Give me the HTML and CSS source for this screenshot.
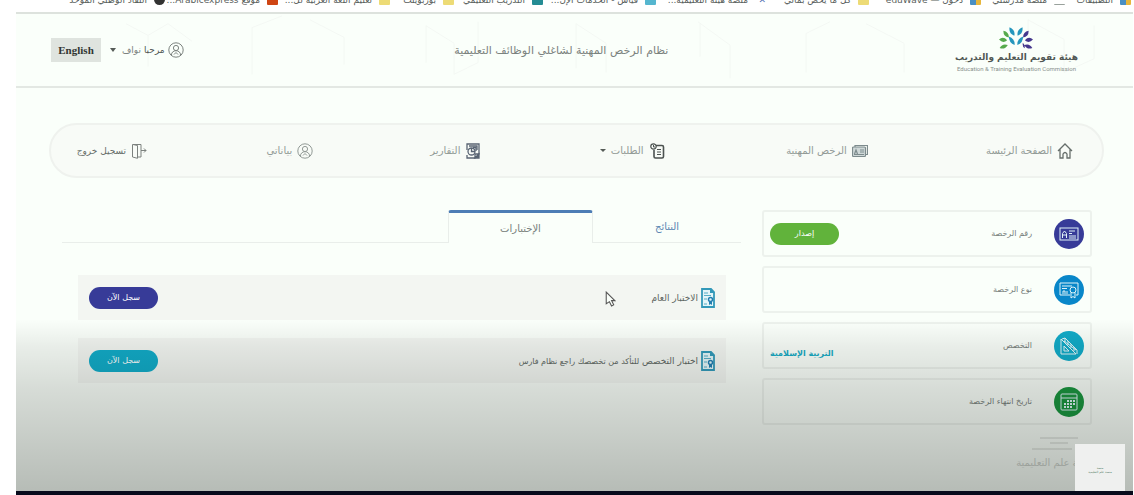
FILE: index.html
```html
<!DOCTYPE html>
<html lang="ar" dir="rtl">
<head>
    <meta charset="UTF-8">
    <meta name="viewport" content="width=device-width, initial-scale=1.0">
    <title>نظام الرخص المهنية</title>
    <link rel="stylesheet" href="styles.css">
</head>
<body>
    <!-- Shared icons -->
    <svg class="sprite" aria-hidden="true">
        <symbol id="user" viewBox="0 0 16 16">
            <g fill="none" stroke="currentColor">
                <circle cx="8" cy="8" r="7.2"/>
                <circle cx="8" cy="6" r="2.6"/>
                <path d="M3.4 13.2c0-6 9.2-6 9.2 0M6 12.5l2-2 2 2"/>
            </g>
        </symbol>
        <symbol id="exam" viewBox="0 0 14 20">
            <path d="M1 1h9l3 3v15H1z" fill="#e3f5f8" stroke="#3399b9" stroke-width="1.8"/>
            <path d="M9 0l5 5H9z" fill="#3399b9"/>
            <path d="M3 5h4M3 7.5h7M3 11h3M3 16h3" stroke="#56aec6" fill="none" stroke-width="1.2"/>
            <circle cx="9.500" cy="11.500" r="2" fill="none" stroke="#237eb0" stroke-width="1.5"/>
            <path d="M8 13v4l1.500-1 1.500 1v-4z" fill="#237eb0"/>
        </symbol>
    </svg>

    <div class="page">
        <!-- Bookmarks -->
        <div class="bookmarks">
            <a href="#"><i class="mark multi"></i>التطبيقات</a>
            <a href="#"><i class="mark dash"></i>منصة مدرستي</a>
            <a href="#"><i class="mark multi"></i>دخول — eduWave</a>
            <a href="#"><i class="mark yellow"></i>كل ما يخص بماتي</a>
            <a href="#"><i class="mark cross">✕</i>منصة هيئة التعليمية...</a>
            <a href="#"><i class="mark sky"></i>قياس - الخدمات الإل...</a>
            <a href="#"><i class="mark teal"></i>التدريب التعليمي</a>
            <a href="#"><i class="mark yellow"></i>بوربوينت</a>
            <a href="#"><i class="mark yellow"></i>تعليم اللغة العربية لل...</a>
            <a href="#"><i class="mark orange"></i>موقع Arabicexpress...</a>
            <a href="#"><i class="mark dark"></i>النفاذ الوطني الموحد</a>
        </div>

        <!-- Header -->
        <header class="header">
            <svg class="pattern" viewBox="0 0 1117 74" preserveAspectRatio="none" aria-hidden="true">
                <path d="M110 10l22 12v32M132 22l20-12 24 18M236 62V14l30-12M294 6l34 18v28M410 50V12l28 18v32l24-12V8M560 56V10l30 20v30M682 8l32 24v34M684 10v34M790 60V20l24-12M850 10l38 20v30M1012 6l36 20v34l30-14V12M1012 6v34"/>
            </svg>
            <a class="logo" href="#">
                <svg viewBox="0 0 100 66" aria-hidden="true">
                    <g fill="#2596bd">
                        <path d="M31 0q18 8 14 25-17-6-14-25zM69 0q-18 8-14 25 17-6 14-25zM29 27q18 6 17 25-17-6-17-25zM71 27q-18 6-17 25 17-6 17-25z"/>
                    </g>
                    <g fill="#56aa4c">
                        <path d="M13 10q17 4 16 20-17-2-16-20zM0 36q12-11 24 2-12 11-24-2zM2 61q8-15 24-9-9 15-24 9z"/>
                    </g>
                    <g fill="#45378d">
                        <path d="M87 10q-17 4-16 20 17-2 16-20zM100 36q-12-11-24 2 12 11 24-2zM98 61q-8-15-24-9 9 15 24 9zM70 46q-2 12 6 16 0-12-6-16z"/>
                    </g>
                </svg>
                <strong>هيئة تقويم التعليم والتدريب</strong>
                <span>Education &amp; Training Evaluation Commission</span>
            </a>
            <h1>نظام الرخص المهنية لشاغلي الوظائف التعليمية</h1>
            <div class="account">
                <button class="user">
                    <svg class="icon"><use href="#user"/></svg>
                    <span><b>مرحبا</b> نواف</span>
                    <i class="caret"></i>
                </button>
                <button class="lang">English</button>
            </div>
        </header>

        <!-- Main navigation -->
        <nav class="nav">
            <a href="#">
                <svg class="icon" viewBox="0 0 16 16" fill="none" stroke="#666e6b" stroke-width="1.3"><path d="M1 8l7-7 7 7M3 6.500V15h3v-4q2-3 4 0v4h3V6.500"/></svg>
                الصفحة الرئيسة
            </a>
            <a href="#">
                <svg class="icon" viewBox="0 0 16 16" fill="none" stroke="#7d8b8d" stroke-width="1.2"><path d="M3 4V2.500h12.500v9H14"/><rect x=".5" y="4" width="13" height="9.500" rx="1" fill="#cfd8d8"/><path d="M2.500 11l1.500-4 1.500 4M8 7h4M8 9h4M2 11.500h10"/></svg>
                الرخص المهنية
            </a>
            <a href="#">
                <svg class="icon" viewBox="0 0 16 16" fill="none" stroke="#4c5250" stroke-width="1.6"><path d="M7 2.500h6q1.500 0 1.500 1.500v9.500q0 1.500-1.500 1.500H6.500Q5 15 5 13.500V7"/><circle cx="4.500" cy="3.500" r="2.700" stroke-width="1.200"/><path d="M4.500 2v2H6M8 6.500h4M8 9h4M8 11.500h4" stroke-width="1"/></svg>
                الطلبات
                <i class="caret small"></i>
            </a>
            <a href="#">
                <svg class="icon" viewBox="0 0 16 16" fill="none" stroke="#596473" stroke-width="1.3"><path d="M2 7V1h12v10l-4 4H2v-3M4 3h8v4M10 15v-4h4"/><circle cx="6.500" cy="8.500" r="3.500"/><path d="M6.500 5v3.500H10M8 4.500h3V8"/><path d="M14 11v4h-4z" fill="#596473"/></svg>
                التقارير
            </a>
            <a href="#">
                <svg class="icon"><use href="#user"/></svg>
                بياناتي
            </a>
            <a class="logout" href="#">
                <svg class="icon" viewBox="0 0 16 16" fill="none" stroke="#7c817e"><path d="M1.500 1.500H10V14H7M1.500 1.500V14l5 1.300V2.500L2 1.500M10 7.500h5M13 5.500l2 2-2 2"/></svg>
                تسجيل خروج
            </a>
        </nav>

        <main class="content">
            <!-- Licence details -->
            <section class="license">
                <div class="card">
                    <span class="badge navy"><svg viewBox="0 0 20 20"><rect x="1" y="4" width="18" height="12"/><path d="M3.500 14V9.500L5.500 7l2 2.500V14M3.500 11h4M10 7h6M10 9.500h3M10 12h7M10 14h7"/></svg></span>
                    <span class="label">رقم الرخصة</span>
                    <button class="pill green">إصدار</button>
                </div>
                <div class="card">
                    <span class="badge blue"><svg viewBox="0 0 20 20"><path d="M11 15H1V3h18v12h-2M3 6h10M3 8.500h5M4 14v-3h2v3M8 14v-3"/><circle cx="14" cy="10" r="3"/><path d="M12 12.500V18l2-1.500 2 1.500v-5.500"/></svg></span>
                    <span class="label">نوع الرخصة</span>
                </div>
                <div class="card">
                    <span class="badge cyan"><svg viewBox="0 0 20 20"><path d="M2 3v15h15zM5 10v5h5zM3 3l3-1 12 12v4M6 2v4M9 5v4M12 8v4M15 11v4M5 5l12 9"/></svg></span>
                    <span class="label">التخصص</span>
                    <span class="value">التربية الإسلامية</span>
                </div>
                <div class="card">
                    <span class="badge forest"><svg viewBox="0 0 20 20"><rect x="2" y="2" width="16" height="16" rx="1"/><path d="M2 6h16"/><path d="M8 9h8M5 12h11M5 15h8" stroke-width="2" stroke-dasharray="2 1"/></svg></span>
                    <span class="label">تاريخ انتهاء الرخصة</span>
                </div>
            </section>

            <!-- Exams -->
            <section class="exams">
                <div class="tabs" role="tablist">
                    <button class="tab" role="tab" aria-selected="false">النتائج</button>
                    <button class="tab active" role="tab" aria-selected="true">الإختبارات</button>
                </div>
                <div class="exam">
                    <svg class="doc"><use href="#exam"/></svg>
                    <p>الاختبار العام</p>
                    <button class="pill navy">سجل الآن</button>
                </div>
                <div class="exam">
                    <svg class="doc"><use href="#exam"/></svg>
                    <p>اختبار التخصص <small>للتأكد من تخصصك راجع نظام فارس</small></p>
                    <button class="pill cyan">سجل الآن</button>
                </div>
            </section>
        </main>

        <footer class="footer">
            <svg viewBox="0 0 52 14" aria-hidden="true"><path d="M10 1h38M20 6h18M2 12h40"/></svg>
            <span>منصة علم التعليمية</span>
        </footer>
        <div class="shade"></div>
        <svg class="cursor" viewBox="0 0 10 15" aria-hidden="true"><path d="M1 1v11l3-2 2 4 2-1-2-4h3z"/></svg>
        <div class="stamp">
            <span>منصة</span>
            <span>منصة علم التعليمية</span>
        </div>
    </div>
</body>
</html>
```
FILE: styles.css
```css
/* General Reset */
* {
    margin: 0;
    padding: 0;
    box-sizing: border-box;
    font-family: 'DejaVu Sans', sans-serif;
}

body {
    direction: ltr;
    padding: 0 1px 0 16px;
    background: #fff;
}

button {
    border: none;
    background: none;
    cursor: pointer;
}

a {
    color: inherit;
    text-decoration: none;
}

.sprite {
    position: absolute;
    width: 0;
    height: 0;
}

.page {
    position: relative;
    direction: rtl;
    min-height: 100vh;
    display: flex;
    flex-direction: column;
    overflow: hidden;
    background: #fafffa;
    border-bottom: 4px solid #080b1c;
}

.icon {
    width: 16px;
    height: 16px;
    flex: none;
}

.caret {
    border: 3px solid transparent;
    border-top: 4px solid #555b57;
    border-bottom: none;
}

.caret.small {
    border-width: 3px 3px 0;
}

/* Bookmarks */
.bookmarks {
    display: grid;
    grid-template-columns: 66fr 84fr 112fr 103fr 110fr 113fr 89fr 64fr 112fr 113fr 92fr;
    align-content: end;
    height: 12px;
    padding: 0 2px 6px 57px;
    background: #fff;
    color: #59605c;
    font-size: 9px;
    line-height: 12px;
}

.bookmarks a {
    display: flex;
    gap: 7px;
    min-width: 0;
    white-space: nowrap;
}

.mark {
    width: 11px;
    height: 11px;
    flex: none;
    font-style: normal;
    border-radius: 1px;
}

.mark.multi { background: linear-gradient(90deg, #4a8fc4 50%, #e7b63c 50%); }
.mark.yellow { background: #eddb76; }
.mark.sky { background: #55b6cf; }
.mark.teal { background: #258c94; }
.mark.orange { background: #cf4513; }
.mark.cross { color: #4a6bb0; }
.mark.dash { border-bottom: 1px solid #99a19c; }
.mark.dark { background: #333; border-radius: 50%; }

/* Header */
.header {
    position: relative;
    display: flex;
    justify-content: space-between;
    align-items: center;
    height: 76px;
    padding: 0 55px 0 35px;
    border-top: 2px solid #dde2dd;
    border-bottom: 2px solid #e3e8e3;
}

.pattern {
    position: absolute;
    inset: 0;
    width: 100%;
    height: 100%;
    fill: none;
    stroke: #f4f8f4;
}

.logo {
    position: relative;
    display: flex;
    flex-direction: column;
    align-items: center;
    margin-left: 16px;
    color: #505754;
}

.logo svg {
    width: 34px;
    height: 23px;
}

.logo strong {
    font-size: 9px;
    line-height: 15px;
}

.logo span {
    font: 6px/8px 'Roboto', sans-serif;
    color: #89908c;
}

.header h1 {
    position: relative;
    font-size: 11px;
    font-weight: normal;
    color: #7a827e;
}

.account {
    position: relative;
    display: flex;
    align-items: center;
    gap: 9px;
}

.user {
    display: flex;
    align-items: center;
    gap: 3px;
    font-size: 9px;
    color: #7c837f;
}

.user b {
    font-weight: normal;
    color: #505653;
}

.user .caret {
    margin-right: 3px;
}

.lang {
    width: 50px;
    height: 24px;
    background: #dfe4df;
    color: #303532;
    font: bold 11px 'Liberation Serif', serif;
}

/* Navigation */
.nav {
    display: grid;
    grid-template-columns: 205fr 203fr 183fr 168fr 166fr 67fr;
    align-items: center;
    height: 55px;
    margin: 35px 29px 0 33px;
    padding: 0 29px;
    background: #f8fbf7;
    border: 2px solid #eff2ee;
    border-radius: 28px;
    color: #929a96;
    font-size: 10px;
}

.nav a {
    display: flex;
    align-items: center;
    gap: 5px;
    min-width: 0;
    white-space: nowrap;
}

.nav .logout {
    color: #666d69;
    font-size: 9px;
}

/* Content */
.content {
    display: grid;
    grid-template-columns: 330fr 679fr;
    gap: 21px;
    padding: 32px 41px 0 46px;
}

.license {
    display: flex;
    flex-direction: column;
    gap: 9px;
}

.card {
    display: flex;
    align-items: center;
    height: 47px;
    padding: 0 6px;
    border: 2px solid #edf2ed;
    border-radius: 3px;
    font-size: 8px;
    color: #777e7a;
}

.badge {
    display: flex;
    align-items: center;
    justify-content: center;
    width: 30px;
    height: 30px;
    margin-left: 22px;
    border-radius: 50%;
}

.badge svg {
    width: 20px;
    height: 20px;
    fill: none;
    stroke: #e0f3f7;
}

.navy { background: #373b98; }
.blue { background: #0987c9; }
.cyan { background: #12abc8; }
.forest { background: #1b9640; }
.green { background: #61b33b; }

.pill {
    width: 69px;
    height: 22px;
    margin-right: auto;
    border-radius: 11px;
    color: #fff;
    font-size: 8px;
}

.value {
    align-self: flex-end;
    margin-right: auto;
    padding-bottom: 9px;
    color: #16aac4;
    font-weight: bold;
}

/* Tabs */
.tabs {
    display: flex;
    height: 33px;
    margin-bottom: 32px;
    border-bottom: 1px solid #e9eeea;
}

.tab {
    width: 148px;
    font-size: 10px;
    color: #5b86b2;
}

.tab.active {
    width: 145px;
    height: 33px;
    background: #fafffa;
    border: 1px solid #e9eeea;
    border-top: 3px solid #4d7db5;
    border-bottom: none;
    border-radius: 3px 3px 0 0;
    color: #777e7a;
}

.exam {
    display: flex;
    align-items: center;
    gap: 3px;
    height: 45px;
    margin: 0 15px 18px 16px;
    padding: 0 11px;
    background: #f3f6f2;
    color: #606763;
    font-size: 9px;
}

.exam small {
    font-size: 8px;
}

.doc {
    width: 14px;
    height: 20px;
}

/* Footer */
.footer {
    display: flex;
    flex-direction: column;
    align-items: center;
    align-self: flex-start;
    margin-top: 12px;
    margin-right: 38px;
    color: #cdd1cc;
    font-size: 10px;
}

.footer svg {
    width: 52px;
    height: 14px;
    margin-bottom: 6px;
    fill: none;
    stroke: #d0d4cf;
}

/* Darkening towards the bottom edge */
.shade {
    position: absolute;
    left: 0;
    right: 0;
    bottom: 0;
    height: 172px;
    background: linear-gradient(transparent, rgba(0, 8, 0, 0.07) 16%, rgba(0, 8, 0, 0.14) 40%, rgba(0, 8, 0, 0.27));
    pointer-events: none;
}

.cursor {
    position: absolute;
    left: 589px;
    top: 291px;
    width: 11px;
    height: 16px;
    fill: #fafffa;
    stroke: #555;
}

.stamp {
    position: absolute;
    right: 8px;
    bottom: -4px;
    display: flex;
    flex-direction: column;
    align-items: center;
    justify-content: center;
    width: 50px;
    height: 51px;
    background: #eff0ef;
    color: #58806a;
    font-size: 3px;
}
```
